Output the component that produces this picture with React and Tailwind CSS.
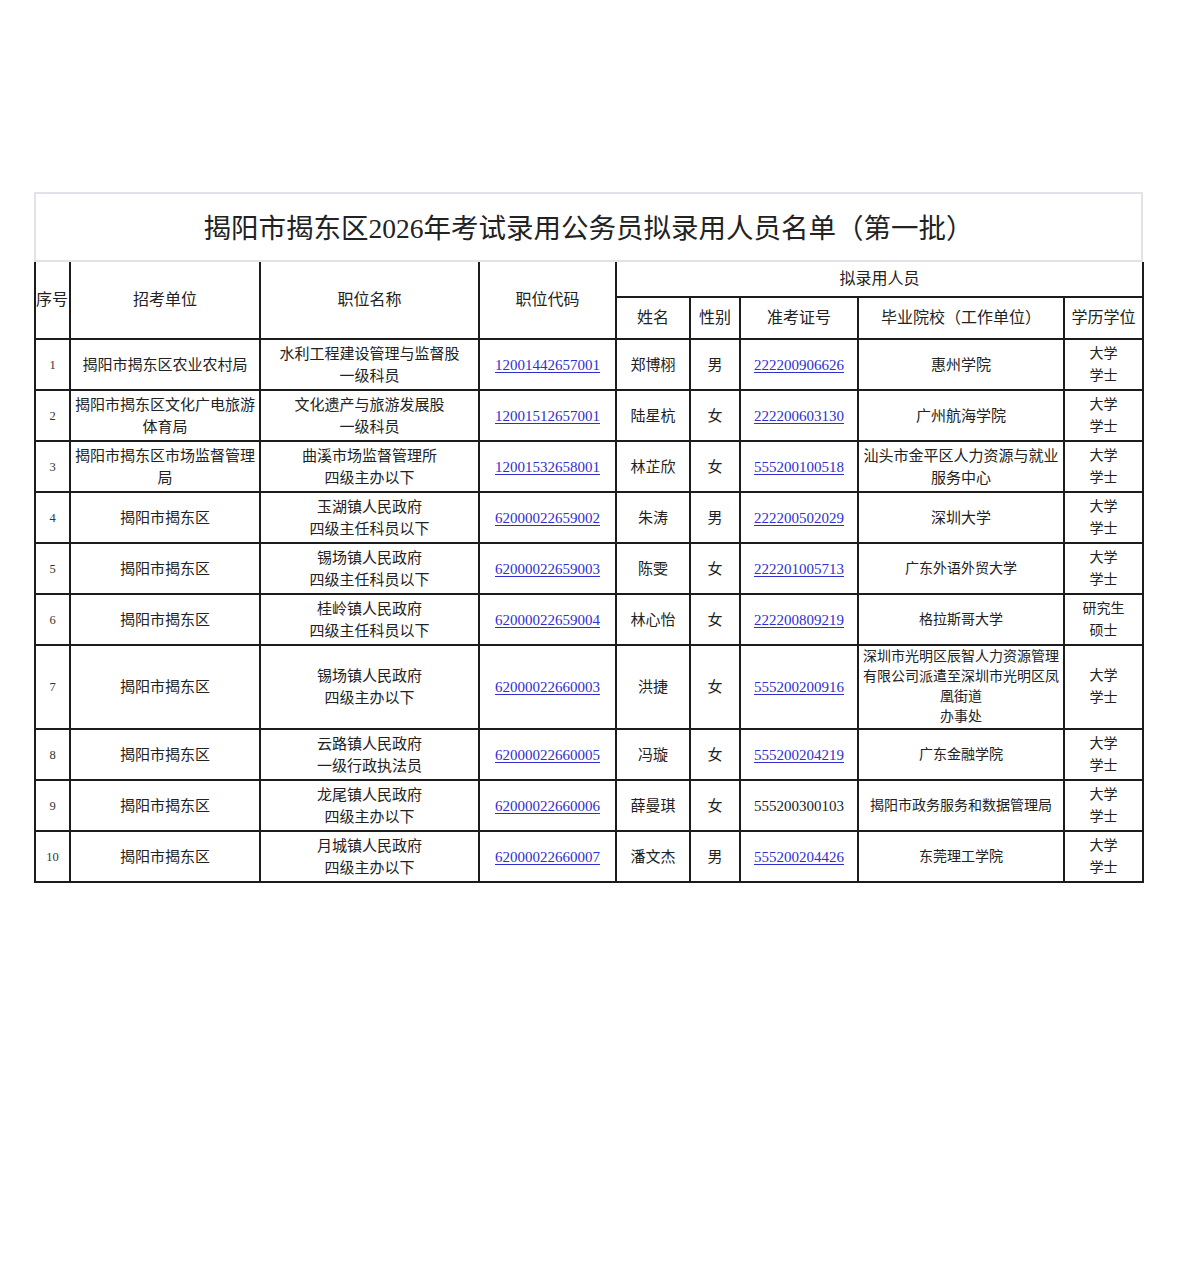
const rows = [
  { no: '1', unit: ['揭阳市揭东区农业农村局'], pos: ['水利工程建设管理与监督股', '一级科员'], code: '12001442657001', name: '郑博栩', sex: '男', exam: '222200906626', examLink: true, school: ['惠州学院'], schoolSize: 'text-[15px]', degree: ['大学', '学士'] },
  { no: '2', unit: ['揭阳市揭东区文化广电旅游', '体育局'], pos: ['文化遗产与旅游发展股', '一级科员'], code: '12001512657001', name: '陆星杭', sex: '女', exam: '222200603130', examLink: true, school: ['广州航海学院'], schoolSize: 'text-[15px]', degree: ['大学', '学士'] },
  { no: '3', unit: ['揭阳市揭东区市场监督管理', '局'], pos: ['曲溪市场监督管理所', '四级主办以下'], code: '12001532658001', name: '林芷欣', sex: '女', exam: '555200100518', examLink: true, school: ['汕头市金平区人力资源与就业', '服务中心'], schoolSize: 'text-[15px]', degree: ['大学', '学士'] },
  { no: '4', unit: ['揭阳市揭东区'], pos: ['玉湖镇人民政府', '四级主任科员以下'], code: '62000022659002', name: '朱涛', sex: '男', exam: '222200502029', examLink: true, school: ['深圳大学'], schoolSize: 'text-[15px]', degree: ['大学', '学士'] },
  { no: '5', unit: ['揭阳市揭东区'], pos: ['锡场镇人民政府', '四级主任科员以下'], code: '62000022659003', name: '陈雯', sex: '女', exam: '222201005713', examLink: true, school: ['广东外语外贸大学'], schoolSize: 'text-[14px]', degree: ['大学', '学士'] },
  { no: '6', unit: ['揭阳市揭东区'], pos: ['桂岭镇人民政府', '四级主任科员以下'], code: '62000022659004', name: '林心怡', sex: '女', exam: '222200809219', examLink: true, school: ['格拉斯哥大学'], schoolSize: 'text-[14px]', degree: ['研究生', '硕士'] },
  { no: '7', unit: ['揭阳市揭东区'], pos: ['锡场镇人民政府', '四级主办以下'], code: '62000022660003', name: '洪捷', sex: '女', exam: '555200200916', examLink: true, school: ['深圳市光明区辰智人力资源管理', '有限公司派遣至深圳市光明区凤', '凰街道', '办事处'], schoolSize: 'text-[14px] leading-[20px]', degree: ['大学', '学士'], tall: true },
  { no: '8', unit: ['揭阳市揭东区'], pos: ['云路镇人民政府', '一级行政执法员'], code: '62000022660005', name: '冯璇', sex: '女', exam: '555200204219', examLink: true, school: ['广东金融学院'], schoolSize: 'text-[14px]', degree: ['大学', '学士'] },
  { no: '9', unit: ['揭阳市揭东区'], pos: ['龙尾镇人民政府', '四级主办以下'], code: '62000022660006', name: '薛曼琪', sex: '女', exam: '555200300103', examLink: false, school: ['揭阳市政务服务和数据管理局'], schoolSize: 'text-[14px]', degree: ['大学', '学士'] },
  { no: '10', unit: ['揭阳市揭东区'], pos: ['月城镇人民政府', '四级主办以下'], code: '62000022660007', name: '潘文杰', sex: '男', exam: '555200204426', examLink: true, school: ['东莞理工学院'], schoolSize: 'text-[14px]', degree: ['大学', '学士'] },
]

const cell = 'border-2 border-[#1c1c1c] text-center align-middle p-0'

const Lines = ({ items }) => items.map((t, i) => <div key={i} className="whitespace-nowrap">{t}</div>)

const Link = ({ children }) => (
  <span className="text-[#2f2fd0] underline underline-offset-2 decoration-[#2f2fd0]">{children}</span>
)

export default function App() {
  return (
    <div className="min-h-screen bg-white font-['Liberation_Serif','Noto_Sans_CJK_SC',serif] text-[#222]">
      <div className="pt-[192px] pl-[34px]">
        <div className="w-[1109px]">
          <div className="h-[70px] border-2 border-[#e2e2ea] flex items-center justify-center text-[27.5px] pt-1">
            揭阳市揭东区2026年考试录用公务员拟录用人员名单（第一批）
          </div>
          <table className="table-fixed border-collapse w-[1108px]">
            <colgroup>
              <col className="w-[35px]" />
              <col className="w-[190px]" />
              <col className="w-[219px]" />
              <col className="w-[137px]" />
              <col className="w-[74px]" />
              <col className="w-[50px]" />
              <col className="w-[118px]" />
              <col className="w-[206px]" />
              <col className="w-[79px]" />
            </colgroup>
            <thead className="text-[16px]">
              <tr className="h-[35px]">
                <th rowSpan={2} className={`${cell} border-t-0 font-normal whitespace-nowrap overflow-visible text-left`}>序号</th>
                <th rowSpan={2} className={`${cell} border-t-0 font-normal`}>招考单位</th>
                <th rowSpan={2} className={`${cell} border-t-0 font-normal`}>职位名称</th>
                <th rowSpan={2} className={`${cell} border-t-0 font-normal`}>职位代码</th>
                <th colSpan={5} className={`${cell} border-t-0 font-normal`}>拟录用人员</th>
              </tr>
              <tr className="h-[42px]">
                <th className={`${cell} font-normal`}>姓名</th>
                <th className={`${cell} font-normal`}>性别</th>
                <th className={`${cell} font-normal`}>准考证号</th>
                <th className={`${cell} font-normal whitespace-nowrap`}>毕业院校（工作单位）</th>
                <th className={`${cell} font-normal whitespace-nowrap`}>学历学位</th>
              </tr>
            </thead>
            <tbody className="text-[15px] leading-[22px]">
              {rows.map((r) => (
                <tr key={r.no} className={r.tall ? 'h-[84px]' : 'h-[51px]'}>
                  <td className={`${cell} text-[12.5px] text-[#333]`}>{r.no}</td>
                  <td className={cell}><Lines items={r.unit} /></td>
                  <td className={cell}><Lines items={r.pos} /></td>
                  <td className={cell}><Link>{r.code}</Link></td>
                  <td className={cell}>{r.name}</td>
                  <td className={cell}>{r.sex}</td>
                  <td className={cell}>{r.examLink ? <Link>{r.exam}</Link> : r.exam}</td>
                  <td className={`${cell} ${r.schoolSize}`}><Lines items={r.school} /></td>
                  <td className={`${cell} text-[14px]`}><Lines items={r.degree} /></td>
                </tr>
              ))}
            </tbody>
          </table>
        </div>
      </div>
    </div>
  )
}
